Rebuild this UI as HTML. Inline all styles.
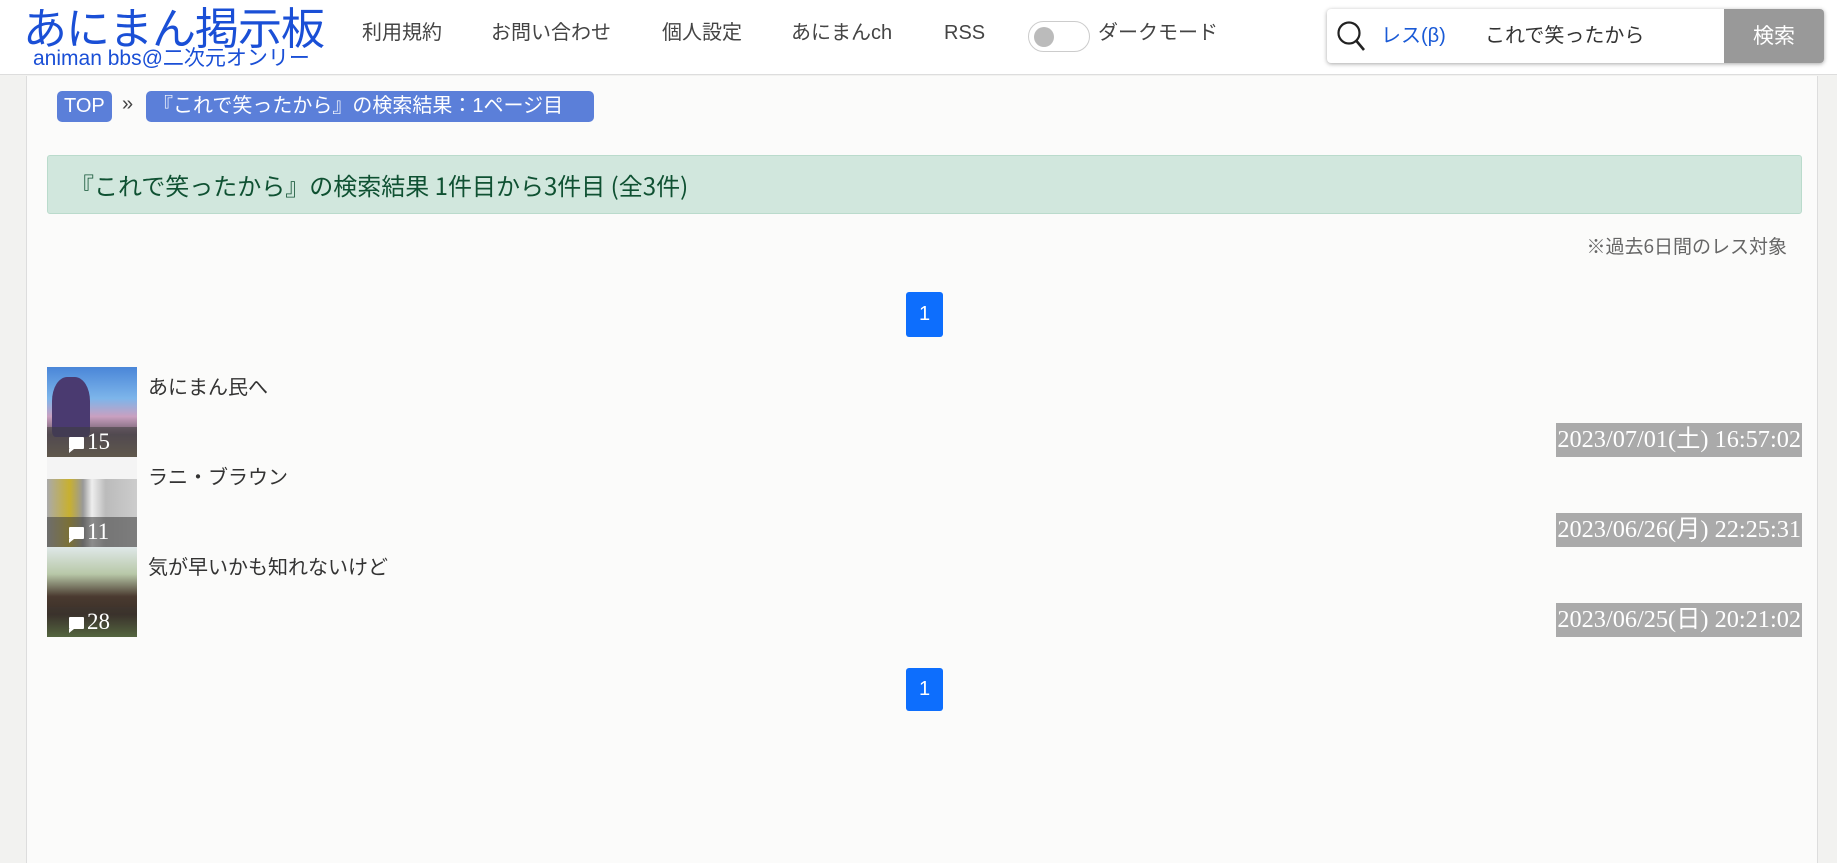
<!DOCTYPE html>
<html><head><meta charset="utf-8"><style>
*{box-sizing:border-box;margin:0;padding:0}
body{width:1837px;height:863px;overflow:hidden;background:#f2f2f0;font-family:"Liberation Sans","Noto Sans CJK JP",sans-serif;color:#333;position:relative}
.hdr{position:absolute;left:0;top:0;width:1837px;height:75px;background:#fff;border-bottom:1px solid #ddd}
.main{position:absolute;left:26px;top:76px;width:1792px;height:787px;background:#fbfbfa;border-left:1px solid #ddd;border-right:1px solid #ddd}
.abs{position:absolute;white-space:nowrap}
.logo{left:23px;top:0px;font-size:44px;line-height:50px;color:#1a4fd6;letter-spacing:-1px;font-family:"Noto Sans CJK JP",sans-serif}
.sub{left:33px;top:48px;font-size:21px;line-height:22px;color:#1a4fd6;letter-spacing:0}
.nav{top:18px;font-size:20px;line-height:30px;height:30px;color:#444}
.tog{left:1028px;top:21px;width:62px;height:31px;border:1px solid #ccc;border-radius:16px;background:#fff}
.tog i{position:absolute;left:5px;top:5px;width:20px;height:20px;border-radius:50%;background:#bbb}
.sbox{left:1327px;top:9px;width:497px;height:54px;background:#fff;border-radius:4px;box-shadow:0 1px 4px rgba(0,0,0,.35);overflow:hidden}
.btn{position:absolute;right:0;top:0;width:100px;height:54px;background:#999;color:#fff;font-size:21px;text-align:center;line-height:56px}
.pill{background:#5b7fd9;color:#fff;border-radius:5px;font-size:20px;height:31px;line-height:31px;padding:0 7px;top:91px}
.alert{left:47px;top:155px;width:1755px;height:59px;background:#d1e7dd;border:1px solid #badbcc;border-radius:3px;color:#0f5132;font-size:24px;line-height:57px;padding-left:22px;font-family:"Noto Sans CJK JP",sans-serif}
.pg{width:37px;height:45px;background:#0d6efd;color:#fff;border-radius:3px;font-size:20px;text-align:center;line-height:45px;left:906px}
.th{left:47px;width:90px;height:90px;overflow:hidden}
.cnt{position:absolute;left:0;bottom:0;width:90px;height:30px;background:rgba(60,60,60,.55);color:#fff;font-family:"Liberation Serif",serif;font-size:23px;line-height:30px;padding-left:22px}
.cnt b{display:inline-block;width:15px;height:12px;background:#fff;margin-right:3px;border-radius:1px;position:relative}
.cnt b:after{content:"";position:absolute;left:0;bottom:-4px;border-left:5px solid #fff;border-bottom:4px solid transparent}
.tt{left:148px;font-size:20px;color:#333}
.dt{right:35px;height:34px;background:#aaa;color:#fff;font-family:"Liberation Serif",serif;font-size:24.3px;line-height:34px;padding:0 1px}
</style></head><body>
<div class="hdr">
<div class="abs logo">あにまん掲示板</div>
<div class="abs sub">animan bbs@二次元オンリー</div>
<div class="abs nav" style="left:362px">利用規約</div>
<div class="abs nav" style="left:491px">お問い合わせ</div>
<div class="abs nav" style="left:662px">個人設定</div>
<div class="abs nav" style="left:791px">あにまんch</div>
<div class="abs nav" style="left:944px">RSS</div>
<div class="abs tog"><i></i></div>
<div class="abs nav" style="left:1098px">ダークモード</div>
<div class="abs sbox">
<svg style="position:absolute;left:8px;top:10px" width="34" height="36" viewBox="0 0 34 36"><circle cx="14" cy="14" r="10.5" fill="none" stroke="#222" stroke-width="2.2"/><line x1="21.5" y1="22" x2="29" y2="31" stroke="#222" stroke-width="2.6"/></svg>
<span class="abs" style="left:54px;top:10px;font-size:20px;color:#1a5ad6">レス(β)</span>
<span class="abs" style="left:158px;top:10px;font-size:20px;color:#333">これで笑ったから</span>
<div class="btn">検索</div>
</div>
</div>
<div class="main"></div>
<div class="abs pill" style="left:57px">TOP</div>
<div class="abs" style="left:122px;top:93px;font-size:20px;color:#444">»</div>
<div class="abs pill" style="left:146px;width:448px">『これで笑ったから』の検索結果：1ページ目</div>
<div class="abs alert">『これで笑ったから』の検索結果 1件目から3件目 (全3件)</div>
<div class="abs" style="right:50px;top:232px;font-size:19px;color:#666;font-family:'Noto Sans CJK JP',sans-serif">※過去6日間のレス対象</div>
<div class="abs pg" style="top:292px">1</div>

<div class="abs th" style="top:367px;background:linear-gradient(180deg,#4a86d8 0%,#7db5ea 35%,#c9a0c0 55%,#6b5a68 75%,#8a7a60 100%)"><div style="position:absolute;left:5px;top:10px;width:38px;height:60px;background:#4a3a70;border-radius:40% 40% 10% 10%"></div><div class="cnt"><b></b>15</div></div>
<div class="abs tt" style="top:371px">あにまん民へ</div>
<div class="abs dt" style="top:423px">2023/07/01(土) 16:57:02</div>

<div class="abs th" style="top:457px;background:linear-gradient(90deg,#aaa 0%,#c8b030 25%,#999 40%,#eee 50%,#bbb 65%,#ccc 100%)"><div style="position:absolute;left:0;top:0;width:90px;height:22px;background:#f4f4f4"></div><div class="cnt"><b></b>11</div></div>
<div class="abs tt" style="top:461px">ラニ・ブラウン</div>
<div class="abs dt" style="top:513px">2023/06/26(月) 22:25:31</div>

<div class="abs th" style="top:547px;background:linear-gradient(180deg,#dfe8e8 0%,#b8c8a8 30%,#4a3a30 55%,#3a3028 75%,#5a7040 100%)"><div class="cnt" style="background:rgba(60,60,60,.2)"><b></b>28</div></div>
<div class="abs tt" style="top:551px">気が早いかも知れないけど</div>
<div class="abs dt" style="top:603px">2023/06/25(日) 20:21:02</div>

<div class="abs pg" style="top:668px;height:43px;line-height:43px">1</div>
</body></html>
